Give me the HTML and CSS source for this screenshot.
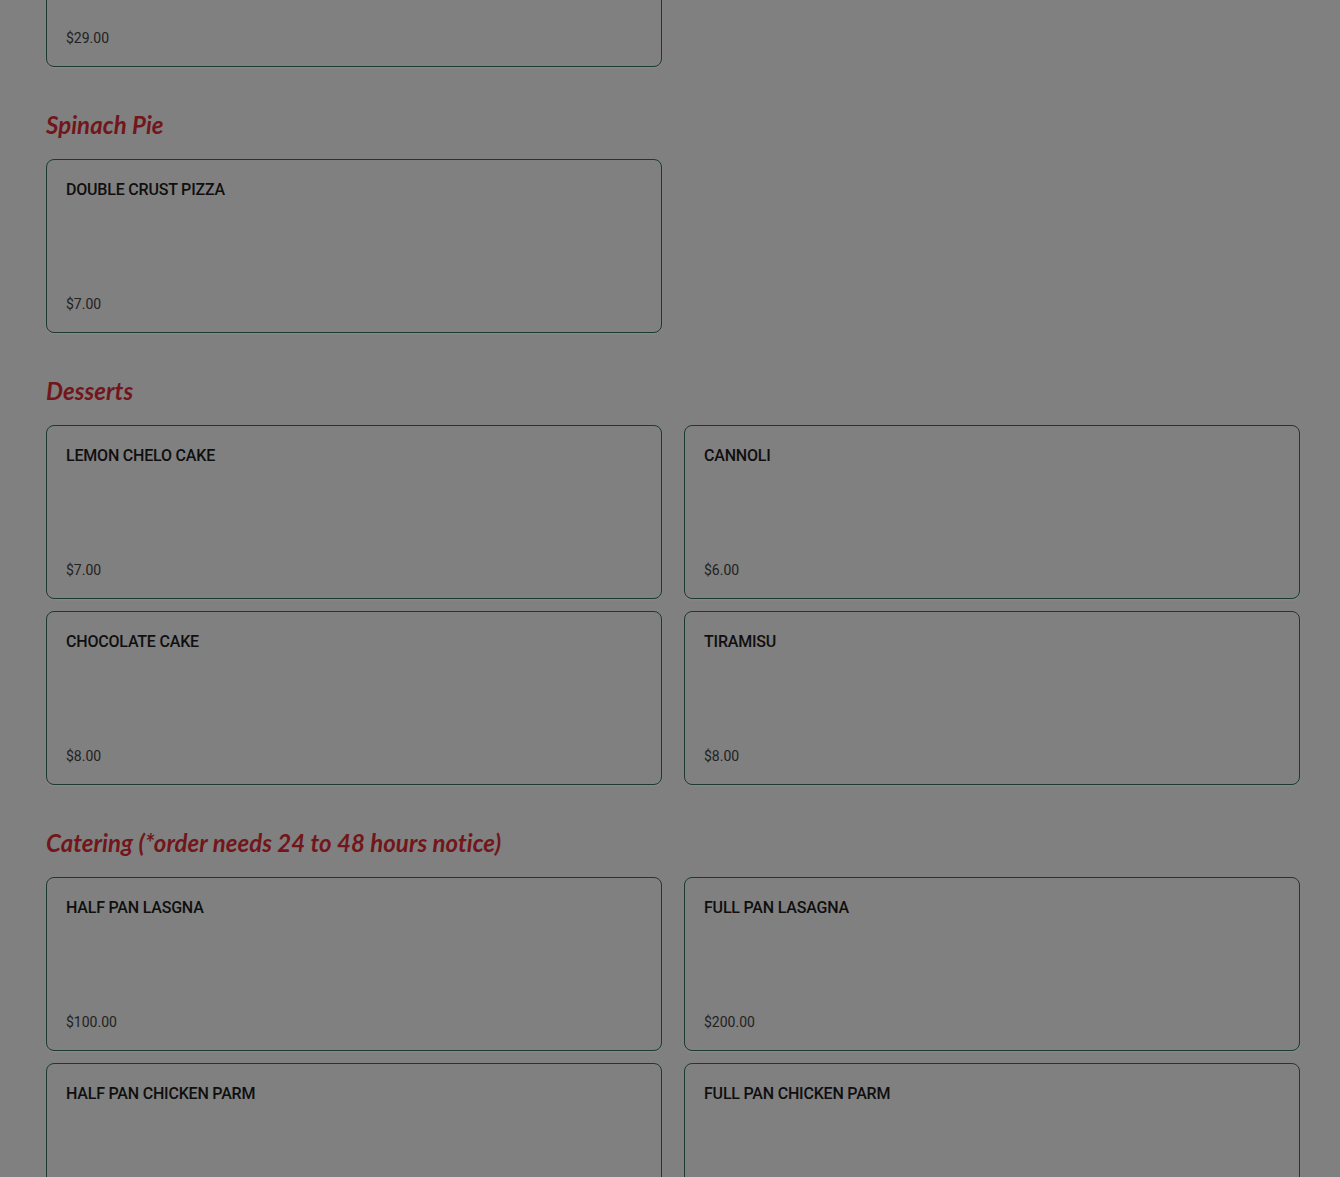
FILE: index.html
```html
<!DOCTYPE html>
<html lang="en">
<head>
<meta charset="utf-8">
<title>Menu</title>
<link rel="stylesheet" href="styles.css">
</head>
<body>
<main class="menu">
  <section class="section section-first">
    <div class="grid">
      <div class="card">
        <div class="name"></div>
        <div class="price">$29.00</div>
      </div>
    </div>
  </section>

  <section class="section">
    <h2 class="heading">Spinach Pie</h2>
    <div class="grid">
      <div class="card">
        <div class="name">DOUBLE CRUST PIZZA</div>
        <div class="price">$7.00</div>
      </div>
    </div>
  </section>

  <section class="section">
    <h2 class="heading">Desserts</h2>
    <div class="grid">
      <div class="card">
        <div class="name">LEMON CHELO CAKE</div>
        <div class="price">$7.00</div>
      </div>
      <div class="card">
        <div class="name">CANNOLI</div>
        <div class="price">$6.00</div>
      </div>
      <div class="card">
        <div class="name">CHOCOLATE CAKE</div>
        <div class="price">$8.00</div>
      </div>
      <div class="card">
        <div class="name">TIRAMISU</div>
        <div class="price">$8.00</div>
      </div>
    </div>
  </section>

  <section class="section">
    <h2 class="heading">Catering (*order needs 24 to 48 hours notice)</h2>
    <div class="grid">
      <div class="card">
        <div class="name">HALF PAN LASGNA</div>
        <div class="price">$100.00</div>
      </div>
      <div class="card">
        <div class="name">FULL PAN LASAGNA</div>
        <div class="price">$200.00</div>
      </div>
      <div class="card card-cut">
        <div class="name">HALF PAN CHICKEN PARM</div>
      </div>
      <div class="card card-cut">
        <div class="name">FULL PAN CHICKEN PARM</div>
      </div>
    </div>
  </section>
</main>
</body>
</html>
```

FILE: styles.css
```css
html, body {
  margin: 0;
  padding: 0;
  background: #808080;
  height: 1177px;
  overflow: hidden;
}

.menu {
  padding: 0 40px 0 46px;
  margin-top: -107px;
  font-family: Roboto, "Liberation Sans", sans-serif;
}

.section {
  margin-bottom: 41px;
}

.heading {
  margin: 0 0 17px 0;
  height: 34px;
  line-height: 34px;
  font-family: Lato, "Noto Sans", sans-serif;
  font-style: italic;
  font-weight: 700;
  font-size: 24px;
  letter-spacing: 0.05px;
  color: #72161b;
}

.grid {
  display: grid;
  grid-template-columns: 616px 616px;
  column-gap: 22px;
  row-gap: 12px;
}

.card {
  box-sizing: border-box;
  height: 174px;
  border: 1px solid #1c3a2e;
  border-radius: 8px;
  padding: 20px 19px 18px 19px;
  display: flex;
  flex-direction: column;
  justify-content: space-between;
  box-shadow: 0 1px 2px rgba(255, 255, 255, 0.08);
}

.name {
  height: 20px;
  line-height: 20px;
  font-size: 16px;
  font-weight: 500;
  letter-spacing: -0.2px;
  color: #0f0f0f;
}

.price {
  height: 20px;
  line-height: 20px;
  font-size: 14px;
  color: #222;
}
```
